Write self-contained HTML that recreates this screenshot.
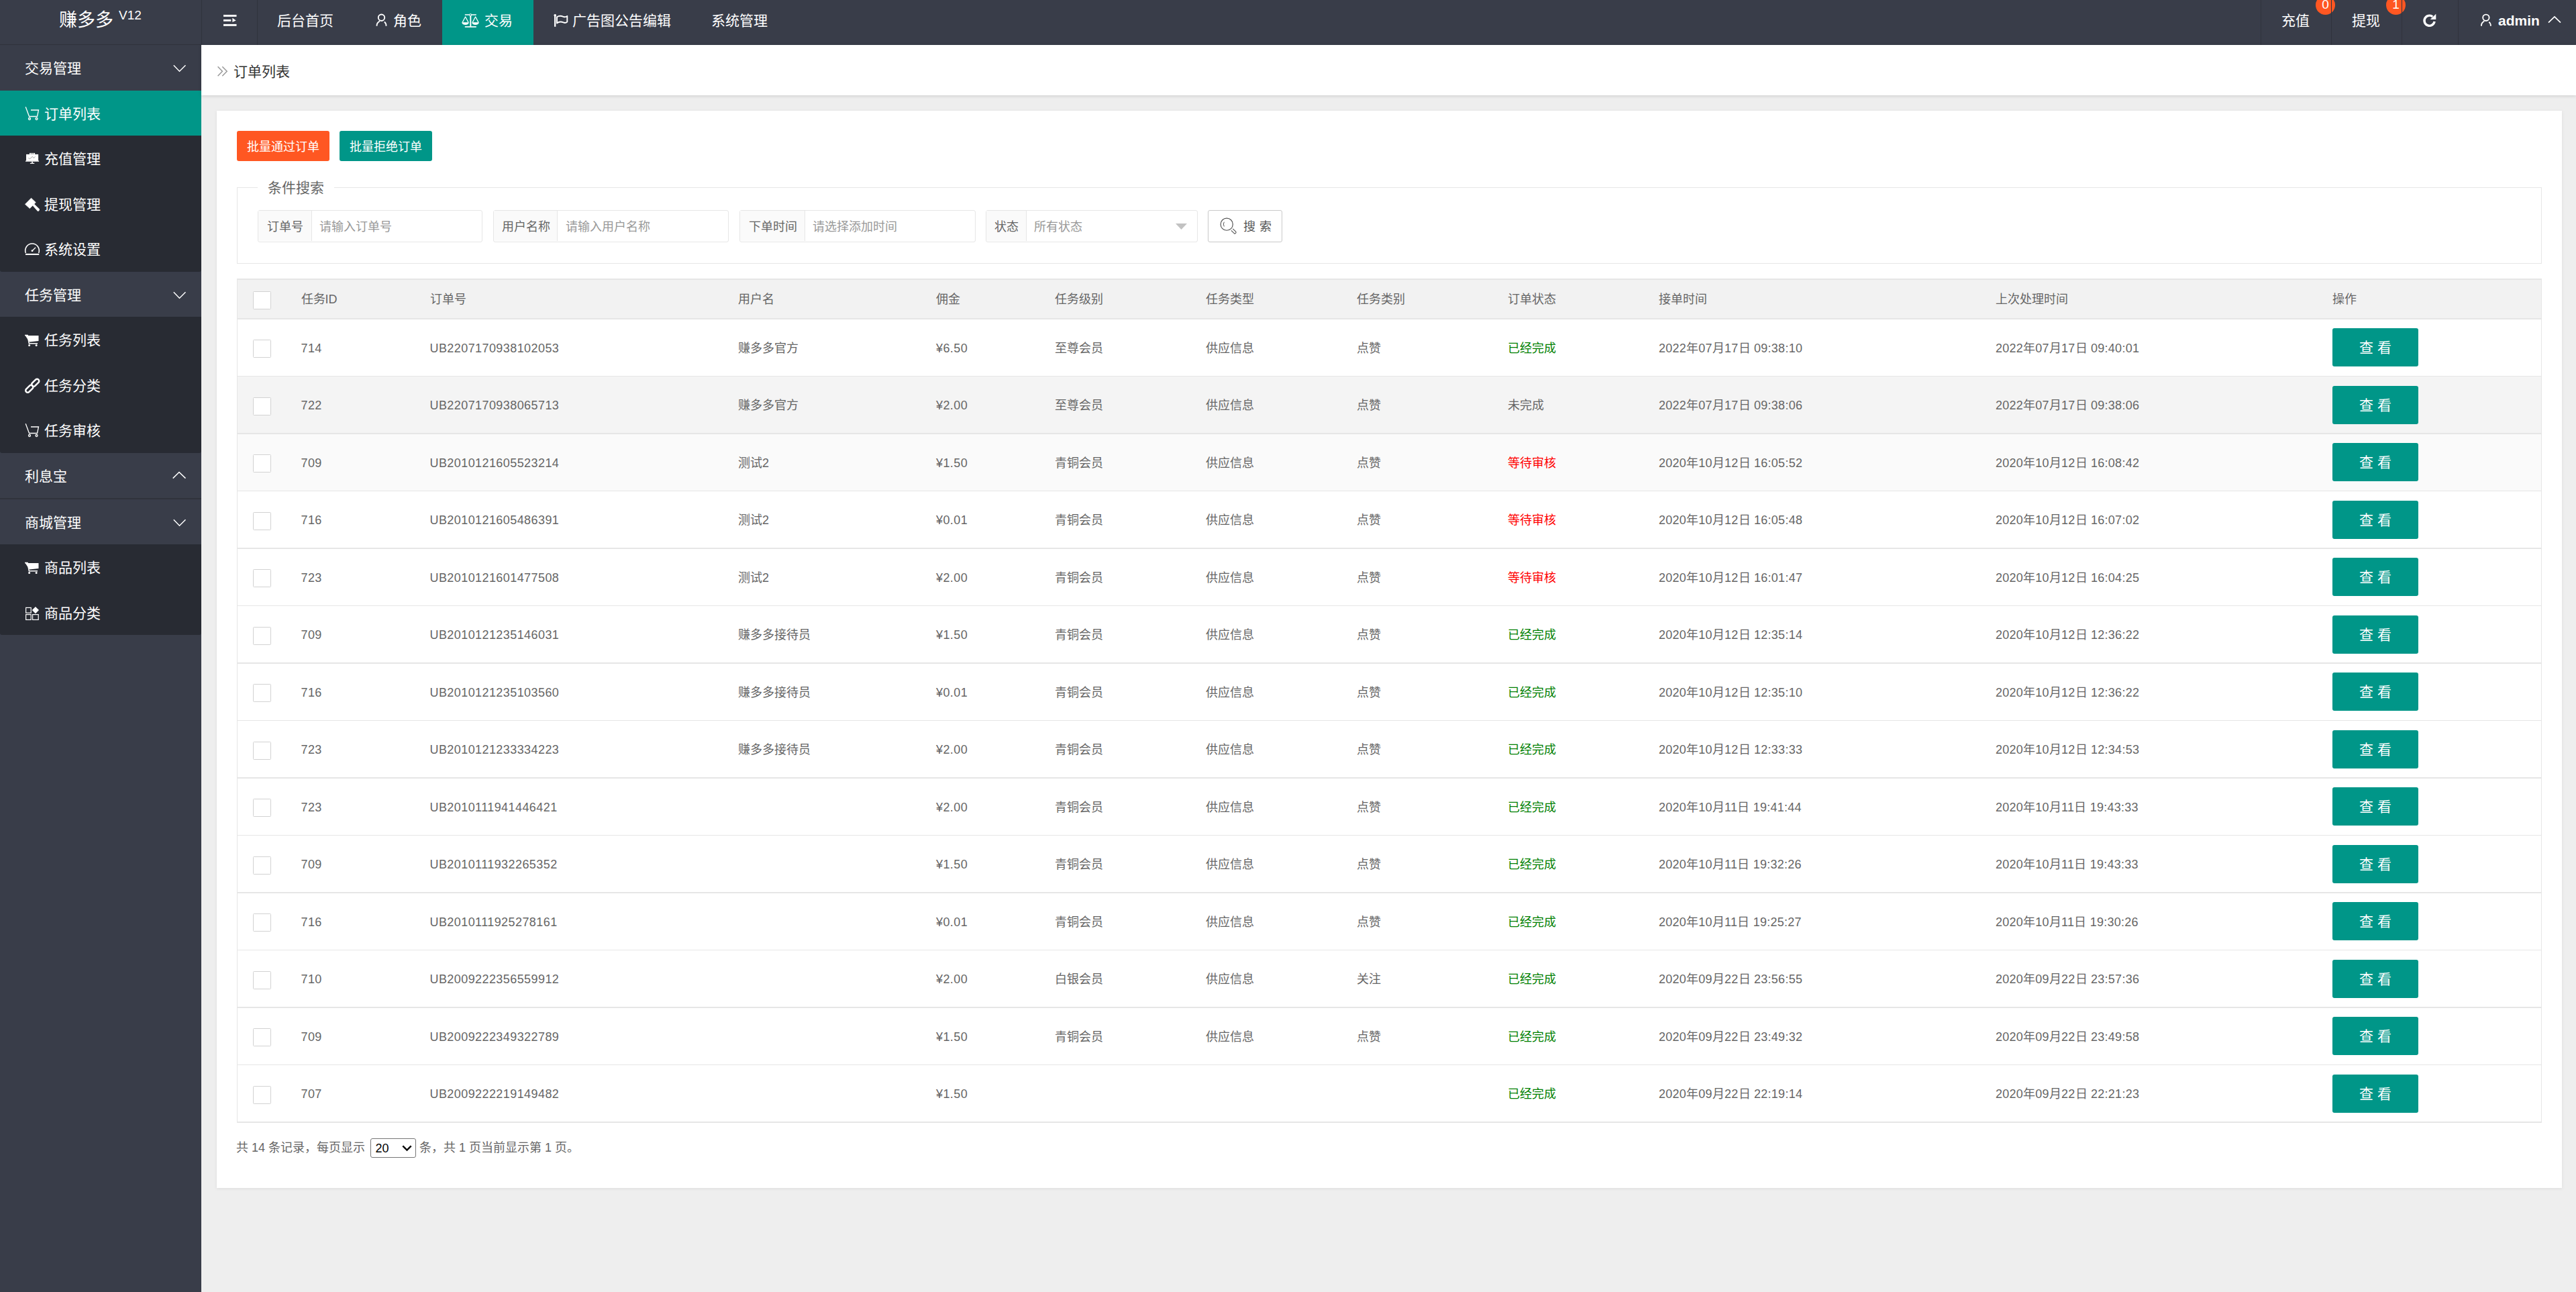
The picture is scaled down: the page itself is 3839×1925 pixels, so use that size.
<!DOCTYPE html><html lang="zh-CN"><head><meta charset="utf-8"><title>订单列表</title><style>
*{margin:0;padding:0;box-sizing:border-box}
html,body{width:3839px;height:1925px;overflow:hidden;background:#eeeeee;font-family:"Liberation Sans",sans-serif;color:#666}
.abs{position:absolute}
#hdr{position:absolute;left:0;top:0;width:3839px;height:67px;background:#393d49}
#side{position:absolute;left:0;top:67px;width:300px;height:1858px;background:#393d49}
.cpanel{position:absolute;left:0;width:300px;background:#282b33;border-radius:0 0 3px 3px}
.sitem{position:absolute;left:0;width:300px;color:#fff;font-size:21px}
.sitem.act{background:#009688}
.stxt{position:absolute;top:1px}
.ico{position:absolute;overflow:visible}
.nav{position:absolute;top:-3px;height:67px;line-height:67px;color:#fff;font-size:21px;white-space:nowrap}
.nav svg{vertical-align:middle}
.badge{position:absolute;top:-7.1px;width:29.2px;height:29.2px;border-radius:14.6px;background:#ff5722;color:#fff;font-size:19px;line-height:28px;text-align:center}
.vdiv{position:absolute;top:0;width:1px;height:67px;background:#30333d}
#crumb{position:absolute;left:300px;top:67px;width:3539px;height:75px;background:#fff;box-shadow:0 1px 5px rgba(0,0,0,.15)}
#card{position:absolute;left:323px;top:165px;width:3495px;height:1605px;background:#fff;box-shadow:0 1px 5px rgba(0,0,0,.08)}
.btn{position:absolute;height:45px;line-height:48px;color:#fff;font-size:18px;padding:0 15px;border-radius:3px;white-space:nowrap}
.fs{position:absolute;border:1.5px solid #e6e6e6}
.legend{position:absolute;background:#fff;padding:0 15px;font-size:21px;color:#666;line-height:30px}
.ig{position:absolute;top:313px;height:48px;border:1.5px solid #e6e6e6;border-radius:3px;background:#fff;font-size:18px}
.ig .lab{position:absolute;left:0;top:0;height:45px;line-height:48px;background:#fafafa;border-right:1.5px solid #e6e6e6;color:#666;padding-left:20px}
.ig .ph{position:absolute;top:0;height:45px;line-height:48px;color:#999}
.thead{position:absolute;background:#f2f2f2}
.trow{position:absolute}
.hl{position:absolute;height:1.5px;background:#e6e6e6}
.tborder{position:absolute;border:1.5px solid #e6e6e6}
.cb{position:absolute;width:27px;height:27px;border:1.5px solid #d2d2d2;background:#fff;border-radius:1.5px}
.th,.td{position:absolute;font-size:18px;line-height:32px;white-space:nowrap;color:#666}
.num{letter-spacing:.42px}
.dt{letter-spacing:.25px}
.sg{color:#008000}
.sr{color:#ff0000}
.vbtn{position:absolute;width:128px;height:57px;line-height:57px;background:#009688;color:#fff;font-size:21px;text-align:center;border-radius:3px}
#pager{position:absolute;left:352px;top:1695px;font-size:18px;line-height:30px;color:#666;white-space:nowrap}
#pager .sel{display:inline-block;vertical-align:middle;width:68px;height:29px;border:1.5px solid #767676;border-radius:3px;color:#000;line-height:28px;padding-left:6.5px;position:relative;margin:0 5px 0 8px;top:-0.5px}
</style></head><body>
<div id="hdr">
<div class="nav" style="left:88px;top:-3px;font-size:27px">赚多多<span style="position:absolute;left:89px;top:-8.5px;font-size:19px"> V12</span></div><div class="abs" style="left:0;top:66px;width:300px;height:1.5px;background:#2f323b"></div>
<div style="position:absolute;left:300px;top:0;width:1px;height:67px;background:#30333d"></div>
<div class="vdiv" style="left:383px"></div>
<svg class="ico" style="left:332.5px;top:22px" width="20" height="17" viewBox="0 0 20 17"><rect x="0" y="0" width="19.5" height="2.9" fill="#fff"/><rect x="0" y="7" width="11.3" height="2.8" fill="#fff"/><path d="M13.4 4.8 L18.7 8.4 L13.4 11.1 Z" fill="#fff"/><rect x="0" y="13.9" width="19.5" height="2.9" fill="#fff"/></svg>
<div class="nav" style="left:413px">后台首页</div>
<svg class="ico" style="left:555px;top:15px" width="30" height="30" viewBox="0 0 30 30"><circle cx="13.5" cy="11.25" r="4.7" fill="none" stroke="#fff" stroke-width="1.9"/><path d="M6.5 23.75 A7.6 7.6 0 0 1 10.9 16.65" fill="none" stroke="#fff" stroke-width="1.9"/><path d="M17.9 17.55 A7.6 7.6 0 0 1 20.5 23.75" fill="none" stroke="#fff" stroke-width="1.9"/></svg>
<div class="nav" style="left:586px">角色</div>
<div class="abs" style="left:659px;top:0;width:136px;height:67px;background:#009688"></div>
<svg class="ico" style="left:684px;top:15px" width="35" height="30" viewBox="0 0 35 30"><path d="M8.8 7 L15.6 7 M18.8 7 L25.8 7" stroke="#fff" stroke-width="1.5"/><circle cx="17.2" cy="7.2" r="1.5" fill="none" stroke="#fff" stroke-width="1.1"/><path d="M17.3 8.7 L17.3 24.5" stroke="#fff" stroke-width="2"/><path d="M8.8 25 L25.8 25" stroke="#fff" stroke-width="1.7"/><path d="M5.2 18.3 L9.6 10 L14 18.3" fill="none" stroke="#fff" stroke-width="1.3" stroke-linejoin="round"/><path d="M4.2 18.2 L14.9 18.2 Q14.5 21.9 9.55 21.9 Q4.6 21.9 4.2 18.2 Z" fill="#fff"/><path d="M20.2 18.3 L24.6 10 L29 18.3" fill="none" stroke="#fff" stroke-width="1.3" stroke-linejoin="round"/><path d="M19.2 18.2 L29.9 18.2 Q29.5 21.9 24.55 21.9 Q19.6 21.9 19.2 18.2 Z" fill="#fff"/></svg>
<div class="nav" style="left:722px">交易</div>
<svg class="ico" style="left:820px;top:15px" width="30" height="30" viewBox="0 0 30 30"><path d="M7.2 7.5 L7.2 24.8" stroke="#fff" stroke-width="2.3"/><circle cx="7.2" cy="7.8" r="1.8" fill="#fff"/><path d="M10 10.3 C13 8.2 16.5 8.5 19.5 9.8 C21.8 10.8 23.6 10.4 25.3 8.9 L25.3 17.6 C23.6 19.1 21.6 19.3 19.5 18.4 C16.3 17 13.3 16.9 10 19.4 Z" fill="none" stroke="#fff" stroke-width="1.9" stroke-linejoin="round"/></svg>
<div class="nav" style="left:853px">广告图公告编辑</div>
<div class="nav" style="left:1060px">系统管理</div>
<div class="nav" style="left:3400px">充值</div><div class="badge" style="left:3450.9px">0</div>
<div class="nav" style="left:3505px">提现</div><div class="badge" style="left:3555.9px">1</div>
<div class="vdiv" style="left:3369px"></div>
<div class="vdiv" style="left:3474px"></div>
<div class="vdiv" style="left:3579px"></div>
<div class="vdiv" style="left:3663px"></div>
<svg class="ico" style="left:3605px;top:15px" width="30" height="30" viewBox="0 0 30 30"><path d="M20.3 9.8 A7.6 7.6 0 1 0 23.1 17" fill="none" stroke="#fff" stroke-width="3.4"/><path d="M25.3 5.8 L25.3 14 L16.8 14 Z" fill="#fff"/></svg>
<svg class="ico" style="left:3690px;top:15px" width="30" height="30" viewBox="0 0 30 30"><circle cx="14.9" cy="11.3" r="4.7" fill="none" stroke="#fff" stroke-width="1.9"/><path d="M7.9 23.8 A7.6 7.6 0 0 1 12.3 16.700000000000003" fill="none" stroke="#fff" stroke-width="1.9"/><path d="M19.3 17.6 A7.6 7.6 0 0 1 21.9 23.8" fill="none" stroke="#fff" stroke-width="1.9"/></svg>
<div class="nav" style="left:3723px;font-weight:bold">admin</div>
<svg class="ico" style="left:3790px;top:15px" width="35" height="30" viewBox="0 0 35 30"><path d="M8 18.7 L17 9.9 L26 18.7" fill="none" stroke="#fff" stroke-width="1.7"/></svg>
</div>
<div id="side">
</div>
<div class="abs" style="left:0;top:0"><div class="cpanel" style="top:134.5px;height:270.0px"></div>
<div class="cpanel" style="top:472px;height:202.5px"></div>
<div class="cpanel" style="top:811px;height:135px"></div>
<div style="position:absolute;left:0;top:742px;width:300px;height:1.5px;background:#30333c"></div>
<div class="sitem" style="top:67px;height:67.5px;line-height:67.5px"><span class="stxt" style="left:37px">交易管理</span></div>
<svg class="ico" style="left:252px;top:86.25px" width="30" height="30" viewBox="0 0 30 30"><path d="M6.8 11.3 L15.5 20.2 L24.5 11.3" fill="none" stroke="#fff" stroke-width="1.5"/></svg>
<div class="sitem act" style="top:134.5px;height:67.5px;line-height:67.5px"><span class="stxt" style="left:66px">订单列表</span></div>
<svg class="ico" style="left:34px;top:154.5px" width="30" height="30" viewBox="0 0 30 30"><path d="M4.2 4.2 L9.5 18.5 L21.5 18.5 L23.5 9 L12 9" fill="none" stroke="#fff" stroke-width="1.3"/><circle cx="10" cy="22" r="1.5" fill="none" stroke="#fff" stroke-width="1.3"/><circle cx="20.5" cy="22" r="1.5" fill="none" stroke="#fff" stroke-width="1.3"/></svg>
<div class="sitem" style="top:202px;height:67.5px;line-height:67.5px"><span class="stxt" style="left:66px">充值管理</span></div>
<svg class="ico" style="left:34px;top:222.0px" width="30" height="30" viewBox="0 0 30 30"><rect x="10" y="5.9" width="8.1" height="2.2" fill="#fff"/><rect x="11.2" y="6.6" width="5.7" height="0.9" fill="#666"/><rect x="5" y="7.9" width="18.1" height="10" fill="#fff"/><rect x="4" y="17.4" width="20.1" height="1.4" fill="#eee"/><path d="M8.3 13.4 L10.5 14.6 L14.4 11.3 L16.4 13.4 L18.6 11.3" fill="none" stroke="#888" stroke-width="0.8"/><rect x="13.2" y="18.8" width="1.7" height="2.1" fill="#fff"/><rect x="10.9" y="20.8" width="6.3" height="1.2" fill="#fff"/></svg>
<div class="sitem" style="top:269.5px;height:67.5px;line-height:67.5px"><span class="stxt" style="left:66px">提现管理</span></div>
<svg class="ico" style="left:34px;top:289.5px" width="30" height="30" viewBox="0 0 30 30"><path d="M3.5 14.3 L12.5 5.2 L19.2 11.6 L10.3 20.5 Z" fill="#fff" stroke="#fff" stroke-width="0.8" stroke-linejoin="round"/><path d="M14.5 16.3 L17 13.8 L24.8 21.6 Q25.3 23.2 24 24.3 Q22.8 25.2 21.8 24.6 Z" fill="#fff"/></svg>
<div class="sitem" style="top:337px;height:67.5px;line-height:67.5px"><span class="stxt" style="left:66px">系统设置</span></div>
<svg class="ico" style="left:34px;top:357.0px" width="30" height="30" viewBox="0 0 30 30"><path d="M4.4 20 A10.3 10.3 0 1 1 23.6 20" fill="none" stroke="#fff" stroke-width="1.6"/><rect x="4" y="20.9" width="20.2" height="2" fill="#fff"/><path d="M14 16.7 L19 11.8" fill="none" stroke="#fff" stroke-width="1.3"/><circle cx="14" cy="16.7" r="1.4" fill="#fff"/></svg>
<div class="sitem" style="top:404.5px;height:67.5px;line-height:67.5px"><span class="stxt" style="left:37px">任务管理</span></div>
<svg class="ico" style="left:252px;top:423.75px" width="30" height="30" viewBox="0 0 30 30"><path d="M6.8 11.3 L15.5 20.2 L24.5 11.3" fill="none" stroke="#fff" stroke-width="1.5"/></svg>
<div class="sitem" style="top:472px;height:67.5px;line-height:67.5px"><span class="stxt" style="left:66px">任务列表</span></div>
<svg class="ico" style="left:34px;top:492.0px" width="30" height="30" viewBox="0 0 30 30"><path d="M3 6.9 L7.3 6.9 L7.6 8 L23.5 8 L23.5 16 L9.9 17.6 Z" fill="#fff"/><path d="M3 7.6 L7 7.6 L9.3 19.8 L22 19.8" fill="none" stroke="#fff" stroke-width="1.5"/><circle cx="9.6" cy="22.4" r="1.5" fill="#fff"/><circle cx="20.1" cy="22.4" r="1.5" fill="#fff"/></svg>
<div class="sitem" style="top:539.5px;height:67.5px;line-height:67.5px"><span class="stxt" style="left:66px">任务分类</span></div>
<svg class="ico" style="left:34px;top:559.5px" width="30" height="30" viewBox="0 0 30 30"><rect x="-6.6" y="-3" width="13.2" height="6" rx="3" fill="none" stroke="#fff" stroke-width="2.5" transform="translate(9.8 19.2) rotate(-45)"/><rect x="-6.6" y="-3" width="13.2" height="6" rx="3" fill="none" stroke="#fff" stroke-width="2.5" transform="translate(18.7 10.3) rotate(-45)"/></svg>
<div class="sitem" style="top:607px;height:67.5px;line-height:67.5px"><span class="stxt" style="left:66px">任务审核</span></div>
<svg class="ico" style="left:34px;top:627.0px" width="30" height="30" viewBox="0 0 30 30"><path d="M4.2 4.2 L9.5 18.5 L21.5 18.5 L23.5 9 L12 9" fill="none" stroke="#fff" stroke-width="1.3"/><circle cx="10" cy="22" r="1.5" fill="none" stroke="#fff" stroke-width="1.3"/><circle cx="20.5" cy="22" r="1.5" fill="none" stroke="#fff" stroke-width="1.3"/></svg>
<div class="sitem" style="top:674.5px;height:67.5px;line-height:67.5px"><span class="stxt" style="left:37px">利息宝</span></div>
<svg class="ico" style="left:252px;top:693.75px" width="30" height="30" viewBox="0 0 30 30"><path d="M5.7 18.6 L15 9.5 L24.5 18.6" fill="none" stroke="#fff" stroke-width="1.5"/></svg>
<div class="sitem" style="top:743.5px;height:67.5px;line-height:67.5px"><span class="stxt" style="left:37px">商城管理</span></div>
<svg class="ico" style="left:252px;top:762.75px" width="30" height="30" viewBox="0 0 30 30"><path d="M6.8 11.3 L15.5 20.2 L24.5 11.3" fill="none" stroke="#fff" stroke-width="1.5"/></svg>
<div class="sitem" style="top:811px;height:67.5px;line-height:67.5px"><span class="stxt" style="left:66px">商品列表</span></div>
<svg class="ico" style="left:34px;top:831.0px" width="30" height="30" viewBox="0 0 30 30"><path d="M3 6.9 L7.3 6.9 L7.6 8 L23.5 8 L23.5 16 L9.9 17.6 Z" fill="#fff"/><path d="M3 7.6 L7 7.6 L9.3 19.8 L22 19.8" fill="none" stroke="#fff" stroke-width="1.5"/><circle cx="9.6" cy="22.4" r="1.5" fill="#fff"/><circle cx="20.1" cy="22.4" r="1.5" fill="#fff"/></svg>
<div class="sitem" style="top:878.5px;height:67.5px;line-height:67.5px"><span class="stxt" style="left:66px">商品分类</span></div>
<svg class="ico" style="left:34px;top:898.5px" width="30" height="30" viewBox="0 0 30 30"><rect x="4.6" y="6.4" width="7.6" height="7.8" fill="none" stroke="#fff" stroke-width="1.2"/><rect x="4.6" y="16.6" width="7.6" height="7.8" fill="none" stroke="#fff" stroke-width="1.2"/><rect x="14.6" y="16.6" width="8.6" height="7.8" fill="none" stroke="#fff" stroke-width="1.2"/><path d="M18.9 5 L24 10.1 L18.9 15.2 L13.8 10.1 Z" fill="#fff"/></svg></div>
<div id="crumb"></div><svg class="ico" style="left:318px;top:90px" width="30" height="30" viewBox="0 0 30 30"><path d="M6.6 9.3 L13.4 16.3 L6.6 23.2 M13.3 9.3 L20.2 16.3 L13.3 23.2" fill="none" stroke="#999" stroke-width="1.5"/></svg><div><div class="abs" style="left:348px;top:68.5px;line-height:75px;font-size:21px;color:#333">订单列表</div></div>
<div id="card"></div>
<div class="btn" style="left:353px;top:195px;background:#ff5722;width:138px">批量通过订单</div>
<div class="btn" style="left:506px;top:195px;background:#009688;width:138px">批量拒绝订单</div>
<div class="fs" style="left:353px;top:279px;width:3435px;height:114px"></div>
<div class="legend" style="left:384px;top:265px">条件搜索</div>
<div class="ig" style="left:384px;width:335px"><div class="lab" style="width:79.5px;padding-left:13.25px">订单号</div><div class="ph" style="left:91.0px">请输入订单号</div></div>
<div class="ig" style="left:734.5px;width:351.5px"><div class="lab" style="width:95.5px;padding-left:12.25px">用户名称</div><div class="ph" style="left:107.0px">请输入用户名称</div></div>
<div class="ig" style="left:1101.5px;width:352.0px"><div class="lab" style="width:97.0px;padding-left:13.0px">下单时间</div><div class="ph" style="left:108.5px">请选择添加时间</div></div>
<div class="ig" style="left:1468.5px;width:316.5px"><div class="lab" style="width:60.0px;padding-left:12.5px">状态</div><div class="ph" style="left:71.5px">所有状态</div><div class="abs" style="left:282.5px;top:19px;line-height:0"><svg width="17" height="9" viewBox="0 0 17 9"><path d="M0 0 L17 0 L8.5 9 Z" fill="#c2c2c2"/></svg></div></div>
<div class="ig" style="left:1799.5px;width:111px;border-color:#c9c9c9"><div class="ph" style="left:52px;color:#555;letter-spacing:6px">搜索</div></div><svg class="ico" style="left:1808px;top:320px" width="35" height="35" viewBox="0 0 35 35"><circle cx="20.2" cy="14.15" r="9.1" fill="none" stroke="#555" stroke-width="1.2"/><path d="M16.3 10.7 Q14.3 14 16.3 17.5" fill="none" stroke="#555" stroke-width="1"/><path d="M26.8 23.3 L31.3 27.7 A1.75 1.75 0 0 0 33.7 25.2 L29.2 20.8" fill="none" stroke="#555" stroke-width="1.1"/></svg>
<div class="thead" style="left:353px;top:415px;width:3434px;height:60px"></div>
<div class="cb" style="left:377px;top:433.5px"></div>
<div class="th" style="left:448.5px;top:430.0px">任务ID</div>
<div class="th" style="left:640.5px;top:430.0px">订单号</div>
<div class="th" style="left:1100px;top:430.0px">用户名</div>
<div class="th" style="left:1395px;top:430.0px">佣金</div>
<div class="th" style="left:1571.7px;top:430.0px">任务级别</div>
<div class="th" style="left:1796.7px;top:430.0px">任务类型</div>
<div class="th" style="left:2022px;top:430.0px">任务类别</div>
<div class="th" style="left:2246.7px;top:430.0px">订单状态</div>
<div class="th" style="left:2472px;top:430.0px">接单时间</div>
<div class="th" style="left:2974px;top:430.0px">上次处理时间</div>
<div class="th" style="left:3476px;top:430.0px">操作</div>
<div class="trow" style="left:353px;top:474.0px;width:3434px;height:85.5px;background:#fff"></div>
<div class="cb" style="left:377px;top:506.25px"></div>
<div class="td num" style="left:448.5px;top:502.75px">714</div>
<div class="td num" style="left:640.5px;top:502.75px">UB2207170938102053</div>
<div class="td" style="left:1100px;top:502.75px">赚多多官方</div>
<div class="td num" style="left:1395px;top:502.75px">¥6.50</div>
<div class="td" style="left:1571.7px;top:502.75px">至尊会员</div>
<div class="td" style="left:1796.7px;top:502.75px">供应信息</div>
<div class="td" style="left:2022px;top:502.75px">点赞</div>
<div class="td sg" style="left:2246.7px;top:502.75px">已经完成</div>
<div class="td dt" style="left:2472px;top:502.75px">2022年07月17日 09:38:10</div>
<div class="td dt" style="left:2974px;top:502.75px">2022年07月17日 09:40:01</div>
<div class="vbtn" style="left:3476px;top:489.25px">查 看</div>
<div class="trow" style="left:353px;top:559.5px;width:3434px;height:85.5px;background:#f4f4f4"></div>
<div class="cb" style="left:377px;top:591.75px"></div>
<div class="td num" style="left:448.5px;top:588.25px">722</div>
<div class="td num" style="left:640.5px;top:588.25px">UB2207170938065713</div>
<div class="td" style="left:1100px;top:588.25px">赚多多官方</div>
<div class="td num" style="left:1395px;top:588.25px">¥2.00</div>
<div class="td" style="left:1571.7px;top:588.25px">至尊会员</div>
<div class="td" style="left:1796.7px;top:588.25px">供应信息</div>
<div class="td" style="left:2022px;top:588.25px">点赞</div>
<div class="td" style="left:2246.7px;top:588.25px">未完成</div>
<div class="td dt" style="left:2472px;top:588.25px">2022年07月17日 09:38:06</div>
<div class="td dt" style="left:2974px;top:588.25px">2022年07月17日 09:38:06</div>
<div class="vbtn" style="left:3476px;top:574.75px">查 看</div>
<div class="trow" style="left:353px;top:645.0px;width:3434px;height:85.5px;background:#fafafa"></div>
<div class="cb" style="left:377px;top:677.25px"></div>
<div class="td num" style="left:448.5px;top:673.75px">709</div>
<div class="td num" style="left:640.5px;top:673.75px">UB2010121605523214</div>
<div class="td" style="left:1100px;top:673.75px">测试2</div>
<div class="td num" style="left:1395px;top:673.75px">¥1.50</div>
<div class="td" style="left:1571.7px;top:673.75px">青铜会员</div>
<div class="td" style="left:1796.7px;top:673.75px">供应信息</div>
<div class="td" style="left:2022px;top:673.75px">点赞</div>
<div class="td sr" style="left:2246.7px;top:673.75px">等待审核</div>
<div class="td dt" style="left:2472px;top:673.75px">2020年10月12日 16:05:52</div>
<div class="td dt" style="left:2974px;top:673.75px">2020年10月12日 16:08:42</div>
<div class="vbtn" style="left:3476px;top:660.25px">查 看</div>
<div class="trow" style="left:353px;top:730.5px;width:3434px;height:85.5px;background:#fff"></div>
<div class="cb" style="left:377px;top:762.75px"></div>
<div class="td num" style="left:448.5px;top:759.25px">716</div>
<div class="td num" style="left:640.5px;top:759.25px">UB2010121605486391</div>
<div class="td" style="left:1100px;top:759.25px">测试2</div>
<div class="td num" style="left:1395px;top:759.25px">¥0.01</div>
<div class="td" style="left:1571.7px;top:759.25px">青铜会员</div>
<div class="td" style="left:1796.7px;top:759.25px">供应信息</div>
<div class="td" style="left:2022px;top:759.25px">点赞</div>
<div class="td sr" style="left:2246.7px;top:759.25px">等待审核</div>
<div class="td dt" style="left:2472px;top:759.25px">2020年10月12日 16:05:48</div>
<div class="td dt" style="left:2974px;top:759.25px">2020年10月12日 16:07:02</div>
<div class="vbtn" style="left:3476px;top:745.75px">查 看</div>
<div class="trow" style="left:353px;top:816.0px;width:3434px;height:85.5px;background:#fff"></div>
<div class="cb" style="left:377px;top:848.25px"></div>
<div class="td num" style="left:448.5px;top:844.75px">723</div>
<div class="td num" style="left:640.5px;top:844.75px">UB2010121601477508</div>
<div class="td" style="left:1100px;top:844.75px">测试2</div>
<div class="td num" style="left:1395px;top:844.75px">¥2.00</div>
<div class="td" style="left:1571.7px;top:844.75px">青铜会员</div>
<div class="td" style="left:1796.7px;top:844.75px">供应信息</div>
<div class="td" style="left:2022px;top:844.75px">点赞</div>
<div class="td sr" style="left:2246.7px;top:844.75px">等待审核</div>
<div class="td dt" style="left:2472px;top:844.75px">2020年10月12日 16:01:47</div>
<div class="td dt" style="left:2974px;top:844.75px">2020年10月12日 16:04:25</div>
<div class="vbtn" style="left:3476px;top:831.25px">查 看</div>
<div class="trow" style="left:353px;top:901.5px;width:3434px;height:85.5px;background:#fff"></div>
<div class="cb" style="left:377px;top:933.75px"></div>
<div class="td num" style="left:448.5px;top:930.25px">709</div>
<div class="td num" style="left:640.5px;top:930.25px">UB2010121235146031</div>
<div class="td" style="left:1100px;top:930.25px">赚多多接待员</div>
<div class="td num" style="left:1395px;top:930.25px">¥1.50</div>
<div class="td" style="left:1571.7px;top:930.25px">青铜会员</div>
<div class="td" style="left:1796.7px;top:930.25px">供应信息</div>
<div class="td" style="left:2022px;top:930.25px">点赞</div>
<div class="td sg" style="left:2246.7px;top:930.25px">已经完成</div>
<div class="td dt" style="left:2472px;top:930.25px">2020年10月12日 12:35:14</div>
<div class="td dt" style="left:2974px;top:930.25px">2020年10月12日 12:36:22</div>
<div class="vbtn" style="left:3476px;top:916.75px">查 看</div>
<div class="trow" style="left:353px;top:987.0px;width:3434px;height:85.5px;background:#fff"></div>
<div class="cb" style="left:377px;top:1019.25px"></div>
<div class="td num" style="left:448.5px;top:1015.75px">716</div>
<div class="td num" style="left:640.5px;top:1015.75px">UB2010121235103560</div>
<div class="td" style="left:1100px;top:1015.75px">赚多多接待员</div>
<div class="td num" style="left:1395px;top:1015.75px">¥0.01</div>
<div class="td" style="left:1571.7px;top:1015.75px">青铜会员</div>
<div class="td" style="left:1796.7px;top:1015.75px">供应信息</div>
<div class="td" style="left:2022px;top:1015.75px">点赞</div>
<div class="td sg" style="left:2246.7px;top:1015.75px">已经完成</div>
<div class="td dt" style="left:2472px;top:1015.75px">2020年10月12日 12:35:10</div>
<div class="td dt" style="left:2974px;top:1015.75px">2020年10月12日 12:36:22</div>
<div class="vbtn" style="left:3476px;top:1002.25px">查 看</div>
<div class="trow" style="left:353px;top:1072.5px;width:3434px;height:85.5px;background:#fff"></div>
<div class="cb" style="left:377px;top:1104.75px"></div>
<div class="td num" style="left:448.5px;top:1101.25px">723</div>
<div class="td num" style="left:640.5px;top:1101.25px">UB2010121233334223</div>
<div class="td" style="left:1100px;top:1101.25px">赚多多接待员</div>
<div class="td num" style="left:1395px;top:1101.25px">¥2.00</div>
<div class="td" style="left:1571.7px;top:1101.25px">青铜会员</div>
<div class="td" style="left:1796.7px;top:1101.25px">供应信息</div>
<div class="td" style="left:2022px;top:1101.25px">点赞</div>
<div class="td sg" style="left:2246.7px;top:1101.25px">已经完成</div>
<div class="td dt" style="left:2472px;top:1101.25px">2020年10月12日 12:33:33</div>
<div class="td dt" style="left:2974px;top:1101.25px">2020年10月12日 12:34:53</div>
<div class="vbtn" style="left:3476px;top:1087.75px">查 看</div>
<div class="trow" style="left:353px;top:1158.0px;width:3434px;height:85.5px;background:#fff"></div>
<div class="cb" style="left:377px;top:1190.25px"></div>
<div class="td num" style="left:448.5px;top:1186.75px">723</div>
<div class="td num" style="left:640.5px;top:1186.75px">UB2010111941446421</div>
<div class="td num" style="left:1395px;top:1186.75px">¥2.00</div>
<div class="td" style="left:1571.7px;top:1186.75px">青铜会员</div>
<div class="td" style="left:1796.7px;top:1186.75px">供应信息</div>
<div class="td" style="left:2022px;top:1186.75px">点赞</div>
<div class="td sg" style="left:2246.7px;top:1186.75px">已经完成</div>
<div class="td dt" style="left:2472px;top:1186.75px">2020年10月11日 19:41:44</div>
<div class="td dt" style="left:2974px;top:1186.75px">2020年10月11日 19:43:33</div>
<div class="vbtn" style="left:3476px;top:1173.25px">查 看</div>
<div class="trow" style="left:353px;top:1243.5px;width:3434px;height:85.5px;background:#fff"></div>
<div class="cb" style="left:377px;top:1275.75px"></div>
<div class="td num" style="left:448.5px;top:1272.25px">709</div>
<div class="td num" style="left:640.5px;top:1272.25px">UB2010111932265352</div>
<div class="td num" style="left:1395px;top:1272.25px">¥1.50</div>
<div class="td" style="left:1571.7px;top:1272.25px">青铜会员</div>
<div class="td" style="left:1796.7px;top:1272.25px">供应信息</div>
<div class="td" style="left:2022px;top:1272.25px">点赞</div>
<div class="td sg" style="left:2246.7px;top:1272.25px">已经完成</div>
<div class="td dt" style="left:2472px;top:1272.25px">2020年10月11日 19:32:26</div>
<div class="td dt" style="left:2974px;top:1272.25px">2020年10月11日 19:43:33</div>
<div class="vbtn" style="left:3476px;top:1258.75px">查 看</div>
<div class="trow" style="left:353px;top:1329.0px;width:3434px;height:85.5px;background:#fff"></div>
<div class="cb" style="left:377px;top:1361.25px"></div>
<div class="td num" style="left:448.5px;top:1357.75px">716</div>
<div class="td num" style="left:640.5px;top:1357.75px">UB2010111925278161</div>
<div class="td num" style="left:1395px;top:1357.75px">¥0.01</div>
<div class="td" style="left:1571.7px;top:1357.75px">青铜会员</div>
<div class="td" style="left:1796.7px;top:1357.75px">供应信息</div>
<div class="td" style="left:2022px;top:1357.75px">点赞</div>
<div class="td sg" style="left:2246.7px;top:1357.75px">已经完成</div>
<div class="td dt" style="left:2472px;top:1357.75px">2020年10月11日 19:25:27</div>
<div class="td dt" style="left:2974px;top:1357.75px">2020年10月11日 19:30:26</div>
<div class="vbtn" style="left:3476px;top:1344.25px">查 看</div>
<div class="trow" style="left:353px;top:1414.5px;width:3434px;height:85.5px;background:#fff"></div>
<div class="cb" style="left:377px;top:1446.75px"></div>
<div class="td num" style="left:448.5px;top:1443.25px">710</div>
<div class="td num" style="left:640.5px;top:1443.25px">UB2009222356559912</div>
<div class="td num" style="left:1395px;top:1443.25px">¥2.00</div>
<div class="td" style="left:1571.7px;top:1443.25px">白银会员</div>
<div class="td" style="left:1796.7px;top:1443.25px">供应信息</div>
<div class="td" style="left:2022px;top:1443.25px">关注</div>
<div class="td sg" style="left:2246.7px;top:1443.25px">已经完成</div>
<div class="td dt" style="left:2472px;top:1443.25px">2020年09月22日 23:56:55</div>
<div class="td dt" style="left:2974px;top:1443.25px">2020年09月22日 23:57:36</div>
<div class="vbtn" style="left:3476px;top:1429.75px">查 看</div>
<div class="trow" style="left:353px;top:1500.0px;width:3434px;height:85.5px;background:#fff"></div>
<div class="cb" style="left:377px;top:1532.25px"></div>
<div class="td num" style="left:448.5px;top:1528.75px">709</div>
<div class="td num" style="left:640.5px;top:1528.75px">UB2009222349322789</div>
<div class="td num" style="left:1395px;top:1528.75px">¥1.50</div>
<div class="td" style="left:1571.7px;top:1528.75px">青铜会员</div>
<div class="td" style="left:1796.7px;top:1528.75px">供应信息</div>
<div class="td" style="left:2022px;top:1528.75px">点赞</div>
<div class="td sg" style="left:2246.7px;top:1528.75px">已经完成</div>
<div class="td dt" style="left:2472px;top:1528.75px">2020年09月22日 23:49:32</div>
<div class="td dt" style="left:2974px;top:1528.75px">2020年09月22日 23:49:58</div>
<div class="vbtn" style="left:3476px;top:1515.25px">查 看</div>
<div class="trow" style="left:353px;top:1585.5px;width:3434px;height:85.5px;background:#fff"></div>
<div class="cb" style="left:377px;top:1617.75px"></div>
<div class="td num" style="left:448.5px;top:1614.25px">707</div>
<div class="td num" style="left:640.5px;top:1614.25px">UB2009222219149482</div>
<div class="td num" style="left:1395px;top:1614.25px">¥1.50</div>
<div class="td sg" style="left:2246.7px;top:1614.25px">已经完成</div>
<div class="td dt" style="left:2472px;top:1614.25px">2020年09月22日 22:19:14</div>
<div class="td dt" style="left:2974px;top:1614.25px">2020年09月22日 22:21:23</div>
<div class="vbtn" style="left:3476px;top:1600.75px">查 看</div>
<div class="hl" style="left:353px;top:474.0px;width:3434px"></div>
<div class="hl" style="left:353px;top:559.5px;width:3434px"></div>
<div class="hl" style="left:353px;top:645.0px;width:3434px"></div>
<div class="hl" style="left:353px;top:730.5px;width:3434px"></div>
<div class="hl" style="left:353px;top:816.0px;width:3434px"></div>
<div class="hl" style="left:353px;top:901.5px;width:3434px"></div>
<div class="hl" style="left:353px;top:987.0px;width:3434px"></div>
<div class="hl" style="left:353px;top:1072.5px;width:3434px"></div>
<div class="hl" style="left:353px;top:1158.0px;width:3434px"></div>
<div class="hl" style="left:353px;top:1243.5px;width:3434px"></div>
<div class="hl" style="left:353px;top:1329.0px;width:3434px"></div>
<div class="hl" style="left:353px;top:1414.5px;width:3434px"></div>
<div class="hl" style="left:353px;top:1500.0px;width:3434px"></div>
<div class="hl" style="left:353px;top:1585.5px;width:3434px"></div>
<div class="hl" style="left:353px;top:415px;width:3434px;height:2px"></div>
<div class="hl" style="left:353px;top:1671px;width:3434px;height:1.5px"></div>
<div class="tborder" style="left:353px;top:415px;width:3435px;height:1257.5px;border-top:0;border-bottom:0"></div>
<div id="pager">共 14 条记录，每页显示<span class="sel">20<svg style="position:absolute;right:5.5px;top:8.5px" width="15" height="10" viewBox="0 0 15 10"><path d="M1.3 1.3 L7.5 7.6 L13.7 1.3" fill="none" stroke="#000" stroke-width="2.4"/></svg></span>条，共 1 页当前显示第 1 页。</div>
</body></html>
